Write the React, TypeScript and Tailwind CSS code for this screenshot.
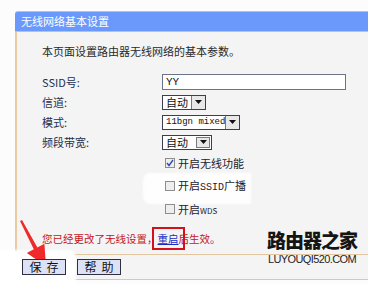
import React, { FC } from "react";

const cn = '"Noto Sans CJK SC", "Liberation Sans", sans-serif';
const mono = '"Liberation Mono", "Noto Sans CJK SC", monospace';

const Arrow: FC = () => (
  <span className="flex h-full w-[14px] items-center justify-center border-l border-[#7a7a7a] bg-[#e8e8e8]">
    <svg width="7" height="4" viewBox="0 0 7 4">
      <polygon points="0,0 7,0 3.5,4" fill="#111" />
    </svg>
  </span>
);

const Select: FC<{ label: string; width: string; monoText?: boolean }> = ({
  label,
  width,
  monoText,
}) => (
  <div
    className={`flex h-[15px] items-center border border-[#3d3d4d] bg-white ${width}`}
  >
    <span
      className={`flex-1 whitespace-nowrap pl-[3px] leading-none text-[#111] ${
        monoText ? "text-[9px]" : "text-[11px]"
      }`}
      style={{ fontFamily: monoText ? mono : cn }}
    >
      {label}
    </span>
    <Arrow />
  </div>
);

const Check: FC<{ checked?: boolean; children: React.ReactNode }> = ({
  checked,
  children,
}) => (
  <div className="relative z-10 flex items-center gap-[3px] pl-[3px]">
    <span className="flex h-[10px] w-[10px] items-center justify-center border border-[#8e8e8e] bg-[#eeeeee]">
      {checked && (
        <svg width="8" height="8" viewBox="0 0 8 8">
          <path d="M1 4 L3 6.5 L7 1" stroke="#2a4fb0" strokeWidth="1.4" fill="none" />
        </svg>
      )}
    </span>
    <span className="whitespace-nowrap text-[11px] leading-none text-[#1c1c2c]">{children}</span>
  </div>
);

const Row: FC<{ label: string; children: React.ReactNode }> = ({ label, children }) => (
  <div className="flex h-[20px] items-center">
    <span className="w-[120px] text-[11px] text-[#24304f]">{label}</span>
    {children}
  </div>
);

const Btn: FC<{ text: string }> = ({ text }) => (
  <button className="relative z-10 flex h-[16px] w-[44px] items-center justify-center whitespace-nowrap border border-[#2f2f3f] bg-[#dde1f5] text-[12px] leading-none tracking-[5px] text-[#111]">
    <span className="ml-[5px]">{text}</span>
  </button>
);

const App: FC = () => {
  return (
    <div
      className="relative h-[284px] w-[368px] overflow-hidden bg-[#fcfcfc] pt-[11px]"
      style={{ fontFamily: cn }}
    >
      <div className="ml-[15px]">
        <div className="flex h-[21px] items-center rounded-tl-[3px] border-y border-[#a8c4f4] bg-[#6a99fb] pl-[6px] text-[11px] text-white">
          无线网络基本设置
        </div>
        <div className="flex h-[222px] flex-col border-l-2 border-[#e8cba3] bg-[#f4f4f4] pl-[25px] pt-[11px]">
          <p className="h-[16px] text-[11px] leading-[16px] text-[#2a2a2a]">
            本页面设置路由器无线网络的基本参数。
          </p>
          <div className="mt-[13px] flex flex-col">
            <Row label="SSID号:">
              <div
                className="flex h-[16px] w-[184px] items-center border border-[#6c7386] bg-white pl-[3px] text-[11px] text-[#111]"
                style={{ fontFamily: mono }}
              >
                YY
              </div>
            </Row>
            <Row label="信道:">
              <Select label="自动" width="w-[44px]" />
            </Row>
            <Row label="模式:">
              <Select label="11bgn mixed" width="w-[78px]" monoText />
            </Row>
            <Row label="频段带宽:">
              <div className="flex h-[15px] w-[50px] items-center border border-[#3d3d4d] bg-white">
                <span className="flex-1 pl-[3px] text-[11px] leading-none text-[#111]">自动</span>
                <span className="mr-[1px] flex h-[11px] w-[14px] items-center justify-center border border-[#7a7a7a] bg-[#e8e8e8]">
                  <svg width="7" height="4" viewBox="0 0 7 4">
                    <polygon points="0,0 7,0 3.5,4" fill="#111" />
                  </svg>
                </span>
              </div>
            </Row>
          </div>
          <div className="ml-[120px] flex flex-col">
            <div className="flex h-[22px] items-center">
              <Check checked>开启无线功能</Check>
            </div>
            <div className="relative flex h-[24px] items-center">
              {/* annotation white patch */}
              <span className="absolute -left-[19px] -top-[1px] h-[31px] w-[108px] rounded-l-[8px] bg-white/90 blur-[1px]" />
              <Check>
                开启<span style={{ fontFamily: mono }} className="text-[10px]">SSID</span>广播
              </Check>
            </div>
            <div className="flex h-[22px] items-center">
              <Check>
                开启<span className="text-[8px]">WDS</span>
              </Check>
            </div>
          </div>
          <div className="mt-[9px] flex h-[20px] items-center whitespace-nowrap text-[10.5px] text-[#c4161c]">
            <span>您已经更改了无线设置，</span>
            <span className="text-[#1a2fc0] underline">重启</span>
            <span>后生效。</span>
          </div>
        </div>
      </div>
      <div className="border-t border-[#e2c6a0] bg-[#f4f4f4]">
        <div className="relative flex h-[24px] items-center gap-[11px] pl-[22px]">
          {/* annotation white patch */}
          <span className="absolute -left-[4px] -top-[5px] h-[40px] w-[80px] rounded-tr-[8px] bg-white blur-[1px]" />
          <Btn text="保存" />
          <Btn text="帮助" />
        </div>
      </div>
      <div className="border-t border-[#e2c6a0]" />

      {/* annotation overlays */}
      <div className="absolute left-[152px] top-[227px] h-[23px] w-[33px] border-2 border-[#d4101c]" />
      <svg className="absolute left-0 top-0" width="368" height="284" viewBox="0 0 368 284">
        <polygon
          points="20,221 22,220 37.4,247.5 44.4,243.7 46,266 26.8,253.1 33.8,249.3"
          fill="#f02a2a"
        />
      </svg>
      <div className="absolute left-[267px] top-[228px] flex flex-col items-center">
        <span className="text-[19px] font-black leading-[24px] tracking-[-1px] text-[#151515]">
          路由器之家
        </span>
        <span
          className="mt-[1px] text-[11px] leading-[13px] tracking-[-0.6px] text-[#1e1e1e]"
          style={{ fontFamily: '"Liberation Sans", sans-serif' }}
        >
          LUYOUQI520.COM
        </span>
      </div>
    </div>
  );
};

export default App;
